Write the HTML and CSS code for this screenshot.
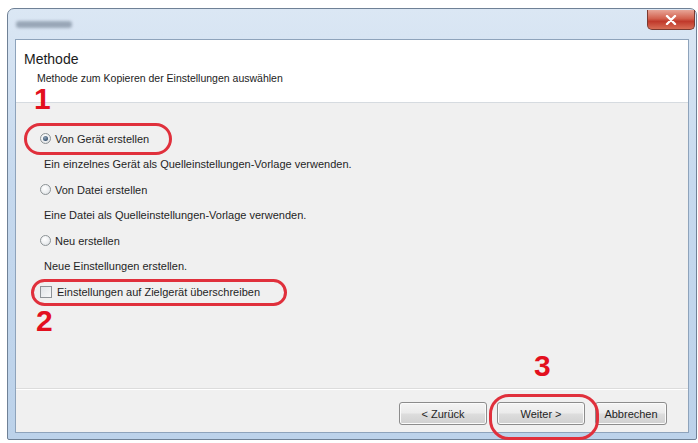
FILE: index.html
```html
<!DOCTYPE html>
<html lang="de">
<head>
<meta charset="utf-8">
<title>Methode</title>
<link rel="stylesheet" href="styles.css">
</head>
<body>
<div class="window">
  <div class="titlebar">
    <span class="title-blur"></span>
    <span class="close"><svg width="12" height="10" viewBox="0 0 12 10"><path d="M2 1 L10 9 M10 1 L2 9" stroke="#fff" stroke-width="2.4" stroke-linecap="round"/></svg></span>
  </div>
  <div class="client">
    <div class="header">
      <div class="h-title">Methode</div>
      <div class="h-sub">Methode zum Kopieren der Einstellungen auswählen</div>
    </div>
    <div class="content">
      <label class="row"><span class="radio checked"></span>Von Gerät erstellen</label>
      <div class="row desc">Ein einzelnes Gerät als Quelleinstellungen-Vorlage verwenden.</div>
      <label class="row"><span class="radio"></span>Von Datei erstellen</label>
      <div class="row desc">Eine Datei  als Quelleinstellungen-Vorlage verwenden.</div>
      <label class="row"><span class="radio"></span>Neu erstellen</label>
      <div class="row desc">Neue Einstellungen erstellen.</div>
      <label class="row"><span class="check"></span>Einstellungen auf Zielgerät überschreiben</label>
    </div>
    <div class="footer">
      <span class="btn">&lt; Zurück</span>
      <span class="btn">Weiter &gt;</span>
      <span class="btn btn-narrow">Abbrechen</span>
    </div>
  </div>
  <span class="callout n1">1</span>
  <span class="callout n2">2</span>
  <span class="callout n3">3</span>
  <span class="ring r1"></span>
  <span class="ring r2"></span>
  <span class="ring r3"></span>
</div>
</body>
</html>
```
FILE: styles.css
```css
* { box-sizing: border-box; }
html, body { margin: 0; padding: 0; background: #ffffff; }
body { font-family: "Liberation Sans", Arial, sans-serif; color: #1c1c1c; }

.window {
  position: relative;
  margin: 8px 0 0 7px;
  width: 690px;
  height: 432px;
  border: 1px solid #6f8196;
  border-radius: 7px 7px 2px 2px;
  background: linear-gradient(180deg, #dbe7f4 0%, #c6d9ee 40%, #bcd2ea 100%);
  padding: 0 7px 6px 7px;
  display: flex;
  flex-direction: column;
}

.titlebar {
  height: 30px;
  display: flex;
  align-items: flex-start;
  justify-content: space-between;
  flex: none;
}
.title-blur {
  margin: 12px 0 0 1px;
  width: 56px;
  height: 7px;
  border-radius: 3px;
  background: #8e9cad;
  filter: blur(1.5px);
  opacity: .85;
}
.close {
  margin: 1px -6px 0 0;
  width: 48px;
  height: 20px;
  border: 1px solid #7a3a30;
  border-top: none;
  border-radius: 0 0 5px 5px;
  background: linear-gradient(180deg, #e8a597 0%, #d2614e 45%, #c0392b 60%, #d86d55 100%);
  display: flex;
  align-items: center;
  justify-content: center;
}

.client {
  flex: 1;
  border: 1px solid #8ea3bb;
  background: #f0f0f0;
  display: flex;
  flex-direction: column;
}

.header {
  height: 63px;
  background: #ffffff;
  border-bottom: 1px solid #d6dbe0;
  padding: 11px 0 0 8px;
  flex: none;
}
.h-title { font-size: 14px; line-height: 17px; color: #1a1a1a; }
.h-sub { font-size: 10.5px; line-height: 14px; padding-left: 13px; margin-top: 3px; color: #222; }

.content {
  flex: 1;
  padding: 23px 0 0 24px;
  display: flex;
  flex-direction: column;
}
.row {
  height: 25.5px;
  flex: none;
  display: flex;
  align-items: center;
  font-size: 11px;
  color: #1f1f1f;
}
.row.desc { padding-left: 4px; }

.radio {
  width: 11px;
  height: 11px;
  border-radius: 50%;
  border: 1px solid #8d9396;
  background: radial-gradient(circle at 40% 35%, #ffffff 0%, #eef0f2 50%, #d6dadd 100%);
  margin-right: 4px;
  display: flex;
  align-items: center;
  justify-content: center;
  flex: none;
}
.radio.checked::after {
  content: "";
  width: 5px;
  height: 5px;
  border-radius: 50%;
  background: radial-gradient(circle at 40% 35%, #8fa4b8 0%, #3a5470 70%);
}
.check {
  width: 12px;
  height: 12px;
  border: 1px solid #8e9398;
  background: linear-gradient(135deg, #dfe3e7 0%, #f7f8f9 100%);
  margin-right: 5px;
  flex: none;
}

.footer {
  height: 44px;
  flex: none;
  border-top: 1px solid #dcdcdc;
  box-shadow: inset 0 1px 0 #ffffff;
  display: flex;
  justify-content: flex-end;
  align-items: flex-start;
  gap: 10px;
  padding: 13px 21px 0 0;
}
.btn {
  width: 88px;
  height: 23px;
  border: 1px solid #8c8c8c;
  border-radius: 3px;
  background: linear-gradient(180deg, #f4f4f4 0%, #ebebeb 48%, #dddddd 52%, #d0d0d0 100%);
  box-shadow: inset 0 0 0 1px #fbfbfb;
  font-size: 11px;
  display: flex;
  align-items: center;
  justify-content: center;
  color: #1f1f1f;
}
.btn-narrow { width: 72px; }

.callout {
  position: absolute;
  font-family: "Liberation Sans", Arial, sans-serif;
  font-weight: bold;
  font-size: 30px;
  line-height: 30px;
  color: #e3101e;
}
.n1 { left: 26px; top: 75px; }
.n2 { left: 28px; top: 297px; }
.n3 { left: 526px; top: 342px; }

.ring {
  position: absolute;
  border: 3px solid #e0303c;
  border-radius: 20px;
}
.r1 { left: 16px; top: 114px; width: 148px; height: 32px; }
.r2 { left: 23px; top: 270px; width: 256px; height: 27px; }
.r3 { left: 481px; top: 385px; width: 110px; height: 46px; }
```
